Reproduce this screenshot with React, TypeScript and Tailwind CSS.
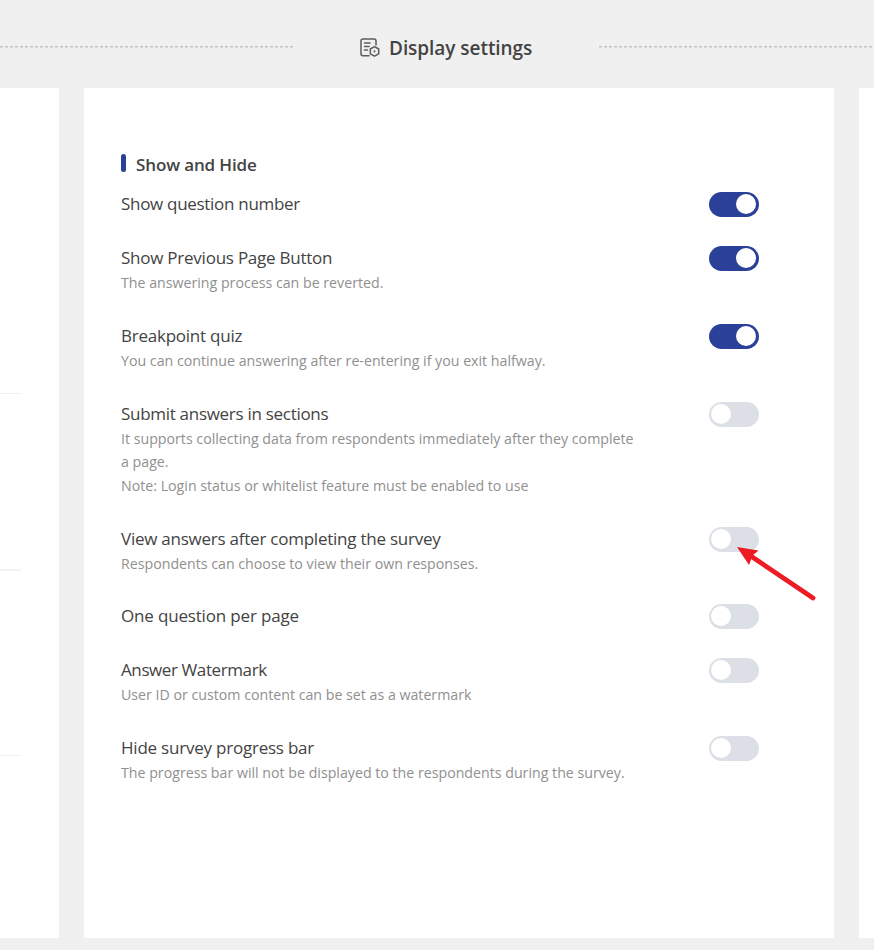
type Item = { title: string; on?: boolean; desc?: string[]; spacing: string };

const items: Item[] = [
  { title: "Show question number", on: true, spacing: "tracking-[-0.3px]" },
  { title: "Show Previous Page Button", on: true, spacing: "tracking-[-0.24px]", desc: ["The answering process can be reverted."] },
  { title: "Breakpoint quiz", on: true, spacing: "tracking-[-0.24px]", desc: ["You can continue answering after re-entering if you exit halfway."] },
  {
    title: "Submit answers in sections",
    spacing: "tracking-[-0.29px]",
    desc: [
      "It supports collecting data from respondents immediately after they complete",
      "a page.",
      "Note: Login status or whitelist feature must be enabled to use",
    ],
  },
  { title: "View answers after completing the survey", spacing: "tracking-[-0.24px]", desc: ["Respondents can choose to view their own responses."] },
  { title: "One question per page", spacing: "tracking-[-0.17px]" },
  { title: "Answer Watermark", spacing: "tracking-[-0.4px]", desc: ["User ID or custom content can be set as a watermark"] },
  { title: "Hide survey progress bar", spacing: "tracking-[-0.22px]", desc: ["The progress bar will not be displayed to the respondents during the survey."] },
];

function Toggle({ on }: { on?: boolean }) {
  return (
    <div className={`flex h-[25px] w-[50px] shrink-0 items-start rounded-full pt-[2px] ${on ? "justify-end bg-[#2b4099] pr-[3px]" : "justify-start bg-[#dcdfe6] pl-[2px]"}`}>
      <div className="size-5 rounded-full bg-white" />
    </div>
  );
}

function Dashes() {
  return (
    <svg className="mt-[46px] h-[2px] w-full" shapeRendering="crispEdges">
      <path d="M0 .5H300" stroke="#c3c3c3" strokeDasharray="3 2" />
      <path d="M0 1.5H300" stroke="#d9d9d9" strokeDasharray="3 2" />
    </svg>
  );
}

function SettingsIcon() {
  return (
    <svg className="mr-[9px] size-5" viewBox="0 0 20 20" fill="none" stroke="#5c5c5c" strokeWidth="1.5" strokeLinecap="round" strokeLinejoin="round">
      <path d="M9 17.8H3A2 2 0 0 1 1 15.8V3A2 2 0 0 1 3 1h11a2 2 0 0 1 2 2v4M4.5 5h5.5M4.5 8.5h4.5M4.5 12h3" />
      <path d="m14.5 8.6 4.2 2.4v4.8l-4.2 2.4-4.2-2.4V11z" />
      <circle cx="14.5" cy="13.4" r=".3" fill="#5c5c5c" />
    </svg>
  );
}

export default function App() {
  return (
    <div className="h-[950px] w-[874px] overflow-hidden bg-[#f0f0f0] font-['Open_Sans','Noto_Sans',sans-serif] text-[#434343]">
      <header className="flex h-[88px]">
        <div className="w-[293px] shrink-0"><Dashes /></div>
        <div className="flex h-[95px] w-[306px] shrink-0 items-center justify-start pl-[67px]">
          <SettingsIcon />
          <h1 className="pt-[2px] text-[19px] font-semibold whitespace-nowrap tracking-[-0.05px]">Display settings</h1>
        </div>
        <div className="w-[275px] shrink-0"><Dashes /></div>
      </header>
      <main className="flex h-[850px]">
        <aside className="w-[59px] shrink-0 bg-white pt-[305px]">
          <div className="h-px w-[21px] bg-[#efefef]" />
          <div className="mt-[175px] h-[2px] w-[21px] bg-[#f3f3f3]" />
          <div className="mt-[184px] h-px w-[21px] bg-[#f3f3f3]" />
        </aside>
        <section className="ml-[25px] w-[750px] shrink-0 bg-white pt-[66px] pr-[75px] pl-[37px]">
          <div className="flex h-[38.25px] items-start">
            <div className="h-[18px] w-[5px] rounded-full bg-[#2b4099]" />
            <h2 className="ml-[10px] text-[17px] leading-[21px] font-semibold whitespace-nowrap tracking-[-0.13px]">Show and Hide</h2>
          </div>
          {items.map((item) => (
            <div key={item.title} className="flex items-start justify-between pb-[29.1px]">
              <div className="whitespace-nowrap">
                <div className={`mb-[2px] text-[17px] leading-[23px] ${item.spacing}`}>{item.title}</div>
                {item.desc?.map((line) => (
                  <div key={line} className="text-[14.2px] leading-[23.6px] text-[#909090]">{line}</div>
                ))}
              </div>
              <Toggle on={item.on} />
            </div>
          ))}
        </section>
        <aside className="ml-[25px] flex-1 bg-white" />
      </main>
      <svg className="pointer-events-none absolute top-0 left-0" width="874" height="950">
        <path d="m750 555.5 63 42.5" stroke="#ed1c24" strokeWidth="4.8" strokeLinecap="round" />
        <path d="m737 547 21.5 3.5-6 5-3.5 9.5z" fill="#ed1c24" />
      </svg>
    </div>
  );
}
